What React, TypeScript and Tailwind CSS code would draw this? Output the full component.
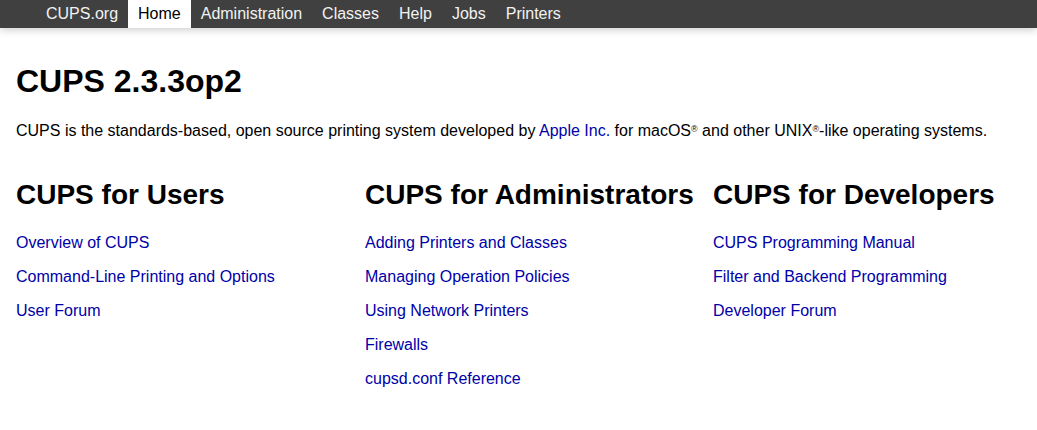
import React from 'react';

const navItems = ['CUPS.org', 'Home', 'Administration', 'Classes', 'Help', 'Jobs', 'Printers'];

const columns = [
  {
    title: 'CUPS for Users',
    links: ['Overview of CUPS', 'Command-Line Printing and Options', 'User Forum'],
  },
  {
    title: 'CUPS for Administrators',
    links: [
      'Adding Printers and Classes',
      'Managing Operation Policies',
      'Using Network Printers',
      'Firewalls',
      'cupsd.conf Reference',
    ],
  },
  {
    title: 'CUPS for Developers',
    links: ['CUPS Programming Manual', 'Filter and Backend Programming', 'Developer Forum'],
  },
];

const App: React.FC = () => {
  return (
    <div className="min-h-[430px] bg-white text-black font-['Liberation_Sans',Arial,sans-serif]">
      <nav className="h-[28px] bg-[#404040] shadow-[0_2px_8px_rgba(0,0,0,0.2)] flex items-stretch pl-[36px]">
        {navItems.map((item) => (
          <a
            key={item}
            href="#"
            className={
              item === 'Home'
                ? 'px-[10px] flex items-center text-[16px] bg-white text-black'
                : 'px-[10px] flex items-center text-[16px] text-[#f2f2f2]'
            }
          >
            {item}
          </a>
        ))}
      </nav>

      <main className="px-[16px]">
        <h1 className="text-[32px] font-bold leading-[38px] mt-[34px]">CUPS 2.3.3op2</h1>
        <p className="text-[16px] leading-[19px] mt-[21px]">
          CUPS is the standards-based, open source printing system developed by{' '}
          <a href="#" className="text-[#0000a8]">Apple Inc.</a> for macOS
          <sup className="text-[9px]">®</sup> and other UNIX<sup className="text-[9px]">®</sup>-like operating systems.
        </p>

        <div className="grid grid-cols-[349px_348px_1fr] mt-[39px]">
          {columns.map((col) => (
            <div key={col.title}>
              <h2 className="text-[28px] font-bold leading-[32px]">{col.title}</h2>
              <ul className="mt-[22px] flex flex-col gap-[15px]">
                {col.links.map((link) => (
                  <li key={link} className="text-[16px] leading-[19px]">
                    <a href="#" className="text-[#0000a8]">{link}</a>
                  </li>
                ))}
              </ul>
            </div>
          ))}
        </div>
      </main>
    </div>
  );
};

export default App;
